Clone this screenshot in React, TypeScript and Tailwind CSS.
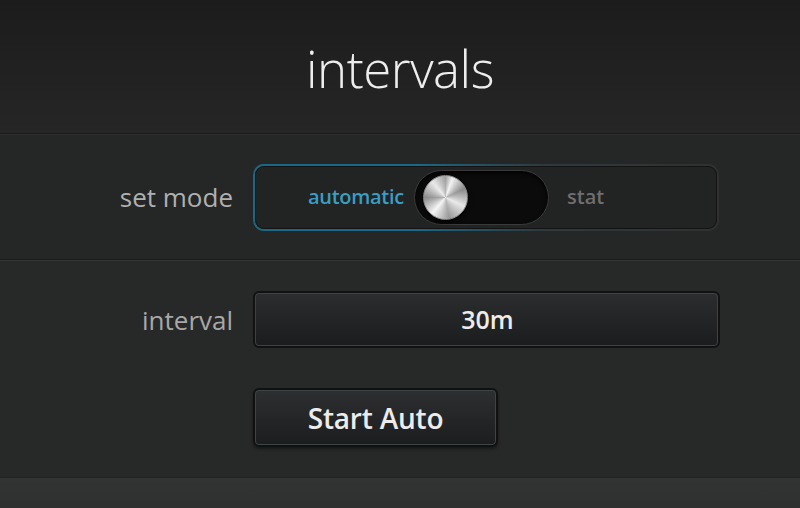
import React from "react";

function Knob() {
  return (
    <div className="relative h-[45px] w-[45px] rounded-full shadow-[0_2px_4px_rgba(0,0,0,0.8)]">
      <div
        className="absolute inset-0 rounded-full border border-[#888]"
        style={{
          background:
            "conic-gradient(from 20deg, #f2f2f2, #8a8a8a 45deg, #e6e6e6 95deg, #9a9a9a 150deg, #f5f5f5 200deg, #8c8c8c 250deg, #e8e8e8 300deg, #a0a0a0 340deg, #f2f2f2)",
        }}
      />
      <div className="absolute inset-0 rounded-full bg-[radial-gradient(circle_at_50%_50%,rgba(255,255,255,0.35),rgba(255,255,255,0)_60%)]" />
    </div>
  );
}

export default function App() {
  return (
    <div
      className="flex h-[508px] w-[800px] flex-col overflow-hidden bg-[#262727]"
      style={{ fontFamily: '"Open Sans", "Noto Sans", sans-serif' }}
    >
      {/* header */}
      <div className="flex h-[133px] items-center justify-center bg-gradient-to-b from-[#1c1c1c] to-[#262626]">
        <h1 className="mt-[4px] text-[51px] font-light leading-none tracking-[-0.5px] text-[#ededed]">
          intervals
        </h1>
      </div>
      <div className="h-px bg-[#1b1b1b]" />
      <div className="h-px bg-[#2e2e2e]" />

      {/* set mode row */}
      <div className="grid h-[124px] grid-cols-[233px_1fr] items-center gap-x-[20px] bg-[#252626] pr-[81px]">
        <span className="text-right text-[26px] leading-none text-[#b0b0b0]">set mode</span>
        <div className="rounded-[11px] bg-[linear-gradient(to_right,#1c6884_0%,#1c6884_35%,#2f3a3e_62%,#303030_100%)] p-[2px]">
          <div className="flex h-[63px] items-center rounded-[9px] bg-[#222323] pl-[53px] shadow-[inset_0_0_0_1px_#141414]">
            <span className="w-[106px] text-[20px] font-semibold leading-none tracking-[-0.3px] text-[#3b9dc2]">automatic</span>
            <div className="relative flex h-[55px] w-[135px] items-center rounded-full border border-[#3a3a3a] bg-[#0b0b0b] pl-[8px] shadow-[inset_0_2px_4px_rgba(0,0,0,0.9)]">
              <Knob />
            </div>
            <span className="ml-[18px] text-[20px] font-semibold leading-none text-[#6f6f6f]">stat</span>
          </div>
        </div>
      </div>

      <div className="h-px bg-[#1c1c1c]" />
      <div className="h-px bg-[#353535]" />

      {/* interval section */}
      <div className="flex h-[216px] flex-col bg-[#272828] pt-[30px]">
        <div className="grid grid-cols-[233px_1fr] items-center gap-x-[20px] pr-[80px]">
          <span className="text-right text-[26px] leading-none text-[#a8a8a8]">interval</span>
          <button className="flex h-[57px] items-center justify-center rounded-[6px] border-2 border-[#121212] bg-gradient-to-b from-[#2c2d2e] to-[#1b1c1d] pl-[2px] shadow-[inset_0_0_0_1px_#3a4448]">
            <span className="text-[25px] font-semibold leading-none text-[#ececec]">30m</span>
          </button>
        </div>
        <div className="mt-[40px] pl-[253px]">
          <button className="flex h-[59px] w-[245px] items-center justify-center rounded-[6px] border-2 border-[#111] bg-gradient-to-b from-[#2e2f30] to-[#1c1d1e] shadow-[inset_0_0_0_1px_#3c4548,0_2px_3px_rgba(0,0,0,0.4)]">
            <span className="text-[28px] font-semibold leading-none tracking-[-0.2px] text-[#ececec]">Start Auto</span>
          </button>
        </div>
      </div>

      <div className="h-px bg-[#222]" />
      <div className="flex-1 bg-gradient-to-b from-[#323333] to-[#2f3030]" />
    </div>
  );
}
